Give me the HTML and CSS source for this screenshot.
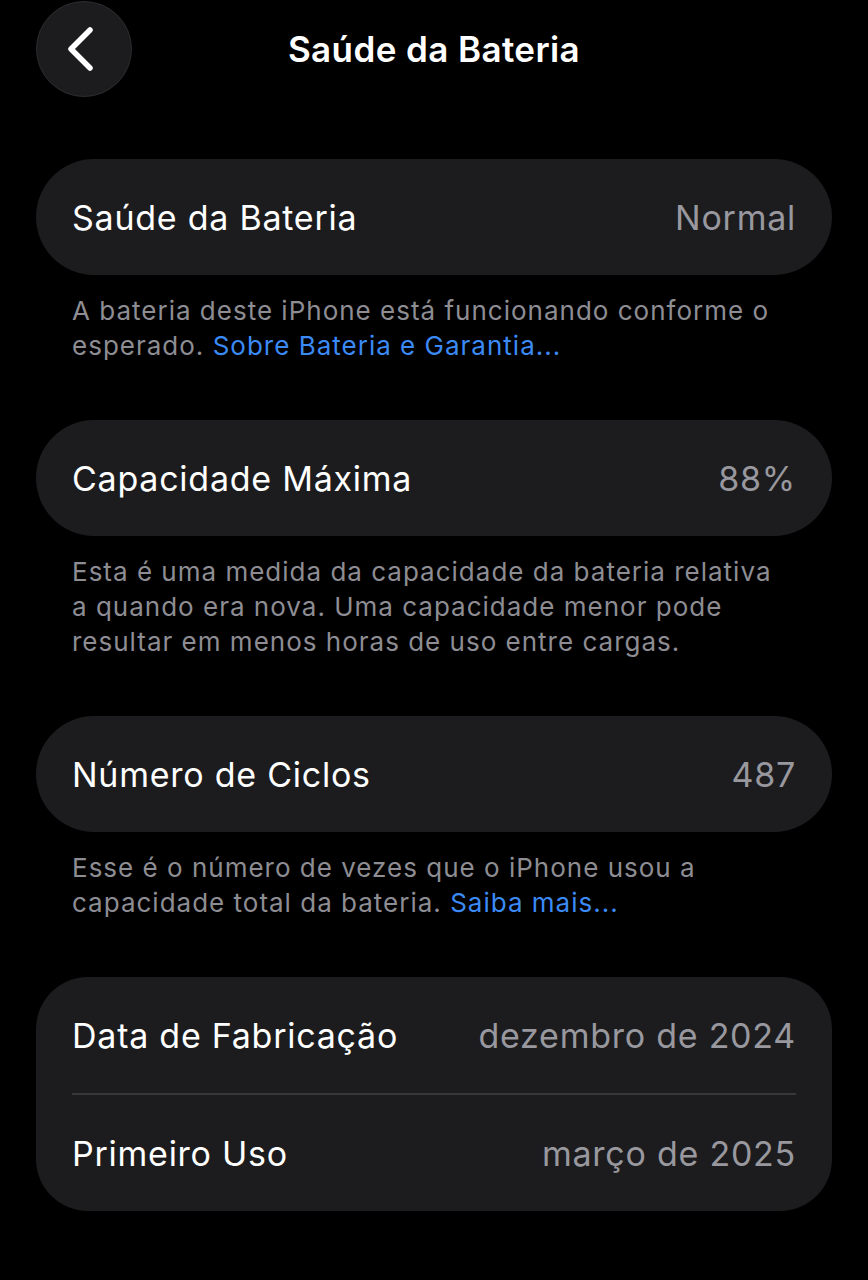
FILE: index.html
```html
<!DOCTYPE html>
<html lang="pt-BR">
<head>
    <meta charset="UTF-8">
    <meta name="viewport" content="width=device-width, initial-scale=1.0">
    <title>Saúde da Bateria</title>
    <link rel="stylesheet" href="styles.css">
</head>
<body>
    <div class="header">
        <button class="back">
            <svg width="30" height="46" viewBox="0 0 30 46">
                <path d="M24 4 L5 23 L24 42" fill="none" stroke="#fff" stroke-width="5.5" stroke-linecap="round" stroke-linejoin="round"/>
            </svg>
        </button>
        <h1 class="title">Saúde da Bateria</h1>
    </div>

    <div class="content">
        <div class="section">
            <div class="card">
                <div class="row">
                    <span class="label">Saúde da Bateria</span>
                    <span class="value">Normal</span>
                </div>
            </div>
            <p class="note">A bateria deste iPhone está funcionando conforme o esperado. <a href="#">Sobre Bateria e Garantia...</a></p>
        </div>

        <div class="section">
            <div class="card">
                <div class="row">
                    <span class="label">Capacidade Máxima</span>
                    <span class="value">88%</span>
                </div>
            </div>
            <p class="note">Esta é uma medida da capacidade da bateria relativa a quando era nova. Uma capacidade menor pode resultar em menos horas de uso entre cargas.</p>
        </div>

        <div class="section">
            <div class="card">
                <div class="row">
                    <span class="label">Número de Ciclos</span>
                    <span class="value">487</span>
                </div>
            </div>
            <p class="note">Esse é o número de vezes que o iPhone usou a capacidade total da bateria. <a href="#">Saiba mais...</a></p>
        </div>

        <div class="section">
            <div class="card group">
                <div class="row">
                    <span class="label">Data de Fabricação</span>
                    <span class="value">dezembro de 2024</span>
                </div>
                <div class="divider"></div>
                <div class="row">
                    <span class="label">Primeiro Uso</span>
                    <span class="value">março de 2025</span>
                </div>
            </div>
        </div>
    </div>
</body>
</html>
```

FILE: styles.css
```css
body {
    margin: 0;
    background: #000;
    color: #fff;
    font-family: Inter, "Noto Sans", sans-serif;
    width: 868px;
}

.header {
    position: relative;
    height: 97px;
    display: flex;
    align-items: center;
    justify-content: center;
}

.back {
    position: absolute;
    left: 36px;
    top: 1px;
    width: 96px;
    height: 96px;
    border-radius: 50%;
    background: #1c1c1e;
    border: 1px solid #2c2c2e;
    display: flex;
    align-items: center;
    justify-content: center;
    padding: 0 6px 0 0;
}

.title {
    margin: 0;
    font-size: 35px;
    font-weight: 600;
    letter-spacing: 0.4px;
}

.content {
    padding: 62px 36px 0;
}

.card {
    background: #1c1c1e;
    border-radius: 58px;
    padding: 0 36px;
}

.card.group {
    border-radius: 52px;
}

.row {
    height: 116px;
    display: flex;
    align-items: center;
    justify-content: space-between;
    font-size: 34px;
    letter-spacing: 0.75px;
}

.value {
    color: #98989e;
}

.divider {
    height: 2px;
    background: #38383a;
}

.note {
    margin: 0;
    padding: 18px 52px 57px 36px;
    font-size: 26px;
    line-height: 35px;
    letter-spacing: 1px;
    color: #8d8d93;
}

.note a {
    color: #3b8af5;
    text-decoration: none;
}
```
